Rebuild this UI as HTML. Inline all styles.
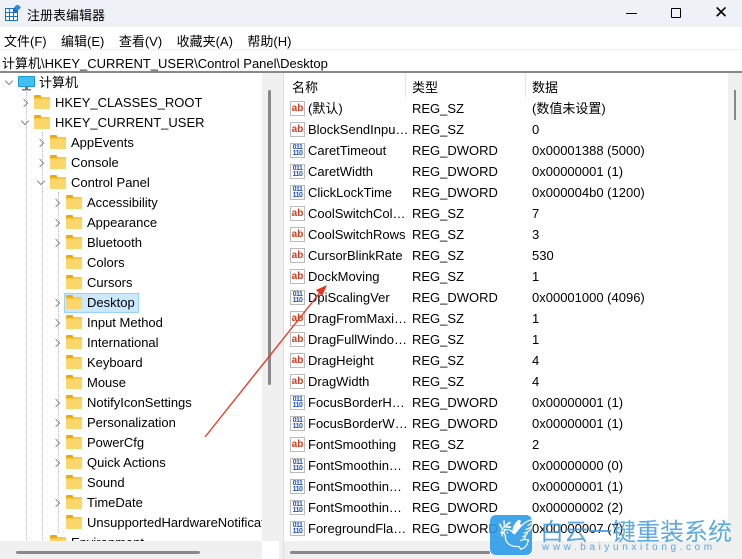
<!DOCTYPE html>
<html><head><meta charset="utf-8"><style>
*{margin:0;padding:0;box-sizing:border-box}
body{width:742px;height:559px;overflow:hidden;background:#fff;font-family:"Liberation Sans","Noto Sans CJK SC",sans-serif;font-size:13px;color:#000;position:relative}
.a{position:absolute;white-space:nowrap}
.t{position:absolute;height:20px;line-height:20px;white-space:nowrap}
.f{position:absolute;width:16px;height:12px;background:#f8c843;border-radius:1px;margin-top:4px}
.f:before{content:"";position:absolute;left:0;top:-2px;width:7px;height:3px;background:#e9a91b;border-radius:1px 1px 0 0}
.f:after{content:"";position:absolute;left:0;top:2px;width:16px;height:10px;background:#fbd66a;border-radius:1px}
.cr,.cd{position:absolute;width:6px;height:6px;border-right:1.3px solid #888;border-bottom:1.3px solid #888}
.cr{transform:rotate(-45deg)}
.cd{transform:rotate(45deg)}
.r{position:absolute;left:288px;height:21px;line-height:21px;white-space:nowrap;width:440px}
.r span{position:absolute}
.n{left:20px;width:100px;overflow:hidden}
.ty{left:124px}
.d{left:244px}
.ic{left:2px;top:3px;width:15px;height:15px;border:1px solid #bbb;background:#fff;font-size:10px;font-weight:bold;line-height:13px;text-align:center}
.ab{color:#d33a1c}
.bi{color:#1b4fbf;font-size:7px;line-height:6px;letter-spacing:-0.5px;padding-top:1px}
</style></head><body>
<div class="a" style="left:0;top:0;width:742px;height:27px;background:#eef2f7"></div>
<svg class="a" style="left:5px;top:5px" width="16" height="16"><rect x="0" y="3" width="13" height="13" fill="#1a73c9"/><g fill="#fff"><rect x="1" y="4" width="3" height="3"/><rect x="5" y="4" width="3" height="3"/><rect x="1" y="8" width="3" height="3"/><rect x="5" y="8" width="3" height="3"/><rect x="9" y="8" width="3" height="3"/><rect x="1" y="12" width="3" height="3"/><rect x="5" y="12" width="3" height="3"/><rect x="9" y="12" width="3" height="3"/></g><rect x="10" y="0" width="5" height="5" fill="#2a8de0" transform="rotate(45 12.5 2.5)"/></svg>
<div class="a" style="left:27px;top:5px;font-size:13px">注册表编辑器</div>
<div class="a" style="left:626px;top:13px;width:11px;height:1px;background:#000"></div>
<div class="a" style="left:671px;top:8px;width:10px;height:10px;border:1px solid #000;border-radius:1px"></div>
<div class="a" style="left:714px;top:3px;font-size:17px;font-weight:300">✕</div>
<div class="a" style="left:4px;top:31px">文件(F)&nbsp;&nbsp;&nbsp;&nbsp;编辑(E)&nbsp;&nbsp;&nbsp;&nbsp;查看(V)&nbsp;&nbsp;&nbsp;&nbsp;收藏夹(A)&nbsp;&nbsp;&nbsp;&nbsp;帮助(H)</div>
<div class="a" style="left:0;top:49px;width:742px;height:1px;background:#eee"></div>
<div class="a" style="left:2px;top:53px">计算机\HKEY_CURRENT_USER\Control Panel\Desktop</div>
<div class="a" style="left:0;top:71px;width:742px;height:2px;background:#888"></div>
<!-- tree -->
<div class="a" style="left:262px;top:73px;width:17px;height:468px;background:#f0f0f0"></div>
<div class="a" style="left:268px;top:90px;width:3px;height:295px;background:#888;border-radius:2px"></div>
<div class="a" style="left:279px;top:73px;width:5px;height:486px;background:#f0f0f0;border-right:1px solid #ddd"></div>
<div class="a" style="left:26px;top:92px;height:448px;border-left:1px dotted #bbb"></div>
<div class="a" style="left:42px;top:132px;height:408px;border-left:1px dotted #bbb"></div>
<div class="a" style="left:58px;top:192px;height:340px;border-left:1px dotted #bbb"></div>
<span class="cd" style="left:6px;top:78px"></span>
<svg class="a" style="left:18px;top:76px" width="17" height="15"><rect x="0" y="0" width="17" height="11" rx="1" fill="#1a9ad8"/><rect x="1" y="1" width="15" height="9" fill="#3fc0f0"/><rect x="7" y="11" width="3" height="2" fill="#777"/><rect x="4" y="13" width="9" height="1.5" fill="#777"/></svg>
<div class="t" style="left:39px;top:73px">计算机</div>
<span class="cr" style="left:21px;top:100px"></span><div class="f" style="left:34px;top:93px"></div><div class="t" style="left:55px;top:93px">HKEY_CLASSES_ROOT</div>
<span class="cd" style="left:22px;top:118px"></span><div class="f" style="left:34px;top:113px"></div><div class="t" style="left:55px;top:113px">HKEY_CURRENT_USER</div>
<span class="cr" style="left:37px;top:140px"></span><div class="f" style="left:50px;top:133px"></div><div class="t" style="left:71px;top:133px">AppEvents</div>
<span class="cr" style="left:37px;top:160px"></span><div class="f" style="left:50px;top:153px"></div><div class="t" style="left:71px;top:153px">Console</div>
<span class="cd" style="left:38px;top:178px"></span><div class="f" style="left:50px;top:173px"></div><div class="t" style="left:71px;top:173px">Control Panel</div>
<div class="a" style="left:64px;top:293px;width:75px;height:20px;background:#cce8ff;border:1px solid #99d1ff"></div>
<span class="cr" style="left:53px;top:200px"></span><div class="f" style="left:66px;top:193px"></div><div class="t" style="left:87px;top:193px">Accessibility</div>
<span class="cr" style="left:53px;top:220px"></span><div class="f" style="left:66px;top:213px"></div><div class="t" style="left:87px;top:213px">Appearance</div>
<span class="cr" style="left:53px;top:240px"></span><div class="f" style="left:66px;top:233px"></div><div class="t" style="left:87px;top:233px">Bluetooth</div>
<div class="f" style="left:66px;top:253px"></div><div class="t" style="left:87px;top:253px">Colors</div>
<div class="f" style="left:66px;top:273px"></div><div class="t" style="left:87px;top:273px">Cursors</div>
<span class="cr" style="left:53px;top:300px"></span><div class="f" style="left:66px;top:293px"></div><div class="t" style="left:87px;top:293px">Desktop</div>
<span class="cr" style="left:53px;top:320px"></span><div class="f" style="left:66px;top:313px"></div><div class="t" style="left:87px;top:313px">Input Method</div>
<span class="cr" style="left:53px;top:340px"></span><div class="f" style="left:66px;top:333px"></div><div class="t" style="left:87px;top:333px">International</div>
<div class="f" style="left:66px;top:353px"></div><div class="t" style="left:87px;top:353px">Keyboard</div>
<div class="f" style="left:66px;top:373px"></div><div class="t" style="left:87px;top:373px">Mouse</div>
<span class="cr" style="left:53px;top:400px"></span><div class="f" style="left:66px;top:393px"></div><div class="t" style="left:87px;top:393px">NotifyIconSettings</div>
<span class="cr" style="left:53px;top:420px"></span><div class="f" style="left:66px;top:413px"></div><div class="t" style="left:87px;top:413px">Personalization</div>
<span class="cr" style="left:53px;top:440px"></span><div class="f" style="left:66px;top:433px"></div><div class="t" style="left:87px;top:433px">PowerCfg</div>
<span class="cr" style="left:53px;top:460px"></span><div class="f" style="left:66px;top:453px"></div><div class="t" style="left:87px;top:453px">Quick Actions</div>
<div class="f" style="left:66px;top:473px"></div><div class="t" style="left:87px;top:473px">Sound</div>
<span class="cr" style="left:53px;top:500px"></span><div class="f" style="left:66px;top:493px"></div><div class="t" style="left:87px;top:493px">TimeDate</div>
<div class="f" style="left:66px;top:513px"></div><div class="t" style="left:87px;top:513px;width:175px;overflow:hidden">UnsupportedHardwareNotificationCache</div>
<div class="f" style="left:50px;top:533px"></div><div class="t" style="left:71px;top:533px">Environment</div>
<div class="a" style="left:0;top:541px;width:262px;height:18px;background:#f0f0f0"></div>
<div class="a" style="left:16px;top:551px;width:184px;height:3px;background:#888;border-radius:2px"></div>
<!-- list -->
<div class="a" style="left:284px;top:73px;width:458px;height:486px;background:#fff"></div>
<div class="a" style="left:728px;top:73px;width:14px;height:486px;background:#f0f0f0"></div>
<div class="a" style="left:734px;top:90px;width:2px;height:30px;background:#888"></div>
<div class="a" style="left:405px;top:73px;width:1px;height:24px;background:#e5e5e5"></div>
<div class="a" style="left:525px;top:73px;width:1px;height:24px;background:#e5e5e5"></div>
<div class="a" style="left:292px;top:77px">名称</div>
<div class="a" style="left:412px;top:77px">类型</div>
<div class="a" style="left:532px;top:77px">数据</div>
<div class="r" style="top:98px"><span class="ic ab">ab</span><span class="n">(默认)</span><span class="ty">REG_SZ</span><span class="d">(数值未设置)</span></div>
<div class="r" style="top:119px"><span class="ic ab">ab</span><span class="n">BlockSendInpu…</span><span class="ty">REG_SZ</span><span class="d">0</span></div>
<div class="r" style="top:140px"><span class="ic bi">011<br>110</span><span class="n">CaretTimeout</span><span class="ty">REG_DWORD</span><span class="d">0x00001388 (5000)</span></div>
<div class="r" style="top:161px"><span class="ic bi">011<br>110</span><span class="n">CaretWidth</span><span class="ty">REG_DWORD</span><span class="d">0x00000001 (1)</span></div>
<div class="r" style="top:182px"><span class="ic bi">011<br>110</span><span class="n">ClickLockTime</span><span class="ty">REG_DWORD</span><span class="d">0x000004b0 (1200)</span></div>
<div class="r" style="top:203px"><span class="ic ab">ab</span><span class="n">CoolSwitchCol…</span><span class="ty">REG_SZ</span><span class="d">7</span></div>
<div class="r" style="top:224px"><span class="ic ab">ab</span><span class="n">CoolSwitchRows</span><span class="ty">REG_SZ</span><span class="d">3</span></div>
<div class="r" style="top:245px"><span class="ic ab">ab</span><span class="n">CursorBlinkRate</span><span class="ty">REG_SZ</span><span class="d">530</span></div>
<div class="r" style="top:266px"><span class="ic ab">ab</span><span class="n">DockMoving</span><span class="ty">REG_SZ</span><span class="d">1</span></div>
<div class="r" style="top:287px"><span class="ic bi">011<br>110</span><span class="n">DpiScalingVer</span><span class="ty">REG_DWORD</span><span class="d">0x00001000 (4096)</span></div>
<div class="r" style="top:308px"><span class="ic ab">ab</span><span class="n">DragFromMaxi…</span><span class="ty">REG_SZ</span><span class="d">1</span></div>
<div class="r" style="top:329px"><span class="ic ab">ab</span><span class="n">DragFullWindo…</span><span class="ty">REG_SZ</span><span class="d">1</span></div>
<div class="r" style="top:350px"><span class="ic ab">ab</span><span class="n">DragHeight</span><span class="ty">REG_SZ</span><span class="d">4</span></div>
<div class="r" style="top:371px"><span class="ic ab">ab</span><span class="n">DragWidth</span><span class="ty">REG_SZ</span><span class="d">4</span></div>
<div class="r" style="top:392px"><span class="ic bi">011<br>110</span><span class="n">FocusBorderH…</span><span class="ty">REG_DWORD</span><span class="d">0x00000001 (1)</span></div>
<div class="r" style="top:413px"><span class="ic bi">011<br>110</span><span class="n">FocusBorderW…</span><span class="ty">REG_DWORD</span><span class="d">0x00000001 (1)</span></div>
<div class="r" style="top:434px"><span class="ic ab">ab</span><span class="n">FontSmoothing</span><span class="ty">REG_SZ</span><span class="d">2</span></div>
<div class="r" style="top:455px"><span class="ic bi">011<br>110</span><span class="n">FontSmoothin…</span><span class="ty">REG_DWORD</span><span class="d">0x00000000 (0)</span></div>
<div class="r" style="top:476px"><span class="ic bi">011<br>110</span><span class="n">FontSmoothin…</span><span class="ty">REG_DWORD</span><span class="d">0x00000001 (1)</span></div>
<div class="r" style="top:497px"><span class="ic bi">011<br>110</span><span class="n">FontSmoothin…</span><span class="ty">REG_DWORD</span><span class="d">0x00000002 (2)</span></div>
<div class="r" style="top:518px"><span class="ic bi">011<br>110</span><span class="n">ForegroundFla…</span><span class="ty">REG_DWORD</span><span class="d">0x00000007 (7)</span></div>
<div class="a" style="left:284px;top:541px;width:444px;height:18px;background:#f0f0f0"></div>
<div class="a" style="left:290px;top:551px;width:200px;height:3px;background:#888;border-radius:2px"></div>
<!-- arrow -->
<svg class="a" style="left:0;top:0" width="742" height="559"><line x1="205" y1="437" x2="322" y2="290" stroke="#e8321e" stroke-width="1.3"/><path d="M327 285 L316 290 L322 296 Z" fill="#e8321e"/></svg>
<!-- watermark -->
<div class="a" style="left:490px;top:515px;width:42px;height:40px;background:#2b9be8;border-radius:6px;opacity:.9"></div>
<div class="a" style="left:497px;top:518px;color:#fff;font-size:30px">🕊</div>
<div class="a" style="left:540px;top:512px;color:#3d9be0;font-size:24px;opacity:.85">白云一键重装系统</div>
<div class="a" style="left:542px;top:542px;color:#3d9be0;font-size:10px;letter-spacing:3.6px;opacity:.85">www.baiyunxitong.com</div>
</body></html>
